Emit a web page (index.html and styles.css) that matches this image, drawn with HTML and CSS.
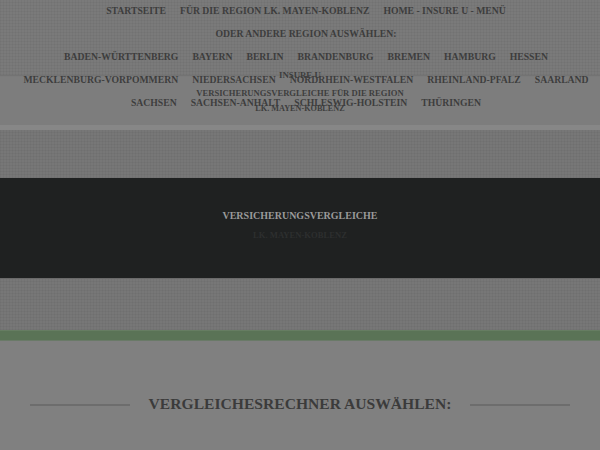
FILE: index.html
```html
<!DOCTYPE html>
<html lang="de">
<head>
<meta charset="utf-8">
<title>Versicherungsvergleiche LK. Mayen-Koblenz</title>
<link rel="stylesheet" href="styles.css">
</head>
<body>
<header class="header">
  <nav class="nav">
    <ul class="nav-row">
      <li>Startseite</li>
      <li>Für die Region LK. Mayen-Koblenz</li>
      <li>Home - Insure U - Menü</li>
    </ul>
    <ul class="nav-row">
      <li>Oder andere Region auswählen:</li>
    </ul>
    <ul class="nav-row">
      <li>Baden-Württenberg</li>
      <li>Bayern</li>
      <li>Berlin</li>
      <li>Brandenburg</li>
      <li>Bremen</li>
      <li>Hamburg</li>
      <li>Hessen</li>
    </ul>
    <ul class="nav-row">
      <li>Mecklenburg-Vorpommern</li>
      <li>Niedersachsen</li>
      <li>Nordrhein-Westfalen</li>
      <li>Rheinland-Pfalz</li>
      <li>Saarland</li>
    </ul>
    <ul class="nav-row">
      <li>Sachsen</li>
      <li>Sachsen-Anhalt</li>
      <li>Schleswig-Holstein</li>
      <li>Thüringen</li>
    </ul>
  </nav>
  <div class="logo">
    <div class="logo-name">Insure U</div>
    <div class="logo-sub">Versicherungsvergleiche für die Region</div>
    <div class="logo-region">LK. Mayen-Koblenz</div>
  </div>
</header>
<div class="strip"></div>
<div class="band"></div>
<section class="hero">
  <h1 class="hero-title">Versicherungsvergleiche</h1>
  <p class="hero-sub">LK. Mayen-Koblenz</p>
</section>
<div class="band band-low"></div>
<div class="green"></div>
<main class="content">
  <div class="section-head">
    <span class="rule"></span>
    <h2 class="section-title">Vergleichesrechner auswählen:</h2>
    <span class="rule"></span>
  </div>
</main>
</body>
</html>
```
FILE: styles.css
```css
* { box-sizing: border-box; }
html, body { margin: 0; padding: 0; }
body {
  background: #808080;
  font-family: "Liberation Serif", "Times New Roman", serif;
  color: #3b3b3b;
  width: 600px;
  height: 450px;
  overflow: hidden;
}
ul { list-style: none; margin: 0; padding: 0; }

.header {
  display: flow-root;
  position: relative;
  height: 125px;
  background-color: #7d7d7d;
}
.header::before {
  content: "";
  position: absolute;
  left: 0;
  right: 0;
  top: 0;
  height: 75px;
  background-color: rgba(0,0,0,.025);
  background-image:
    linear-gradient(90deg, rgba(0,0,0,.035) 1px, transparent 1px),
    linear-gradient(0deg, rgba(0,0,0,.035) 1px, transparent 1px);
  background-size: 3px 3px;
  box-shadow: 0 1px 1px rgba(0,0,0,.08);
}
.nav {
  position: relative;
  margin-top: -1px;
}
.nav-row {
  display: flex;
  justify-content: center;
  gap: 14px;
  padding-left: 12px;
  height: 23px;
  line-height: 23px;
  font-size: 9.7px;
  font-weight: bold;
  text-transform: uppercase;
  white-space: nowrap;
  color: #3d3d3d;
}

.logo {
  position: absolute;
  left: 0;
  right: 0;
  top: 69px;
  text-align: center;
  font-weight: bold;
  text-transform: uppercase;
  color: #3d3d3d;
}
.logo-name {
  font-size: 8.8px;
  line-height: 12px;
  width: 60px;
  margin-left: 279px;
  text-align: left;
}
.logo-sub {
  font-size: 8.6px;
  line-height: 12px;
  margin-top: 6px;
}
.logo-region {
  font-size: 8.2px;
  line-height: 10px;
  margin-top: 5px;
}

.strip {
  height: 5px;
  background: #878787;
}
.band {
  height: 48px;
  background-color: #777;
  background-image:
    linear-gradient(90deg, rgba(0,0,0,.035) 1px, transparent 1px),
    linear-gradient(0deg, rgba(0,0,0,.035) 1px, transparent 1px);
  background-size: 3px 3px;
}
.band-low {
  height: 52px;
  border-top: 1px solid #6a6a6a;
}
.hero {
  height: 100px;
  background: #1f2121;
  text-align: center;
  padding-top: 31px;
}
.hero-title {
  margin: 0;
  font-size: 10px;
  line-height: 14px;
  font-weight: bold;
  text-transform: uppercase;
  color: #9a9a9a;
}
.hero-sub {
  margin: 6px 0 0;
  font-size: 8.6px;
  line-height: 12px;
  font-weight: bold;
  text-transform: uppercase;
  color: #2d2f2f;
}
.green {
  height: 11px;
  background: #5a7356;
  border-top: 1px solid #667d62;
  border-bottom: 1px solid #6a7a68;
}
.content {
  padding: 53px 30px 0;
}
.section-head {
  display: flex;
  align-items: center;
  justify-content: space-between;
}
.rule {
  width: 100px;
  height: 2px;
  background: #6d6d6d;
  margin-top: 2px;
}
.section-title {
  margin: 0;
  font-size: 15.6px;
  line-height: 20px;
  font-weight: bold;
  text-transform: uppercase;
  color: #3b3b3b;
}
```
